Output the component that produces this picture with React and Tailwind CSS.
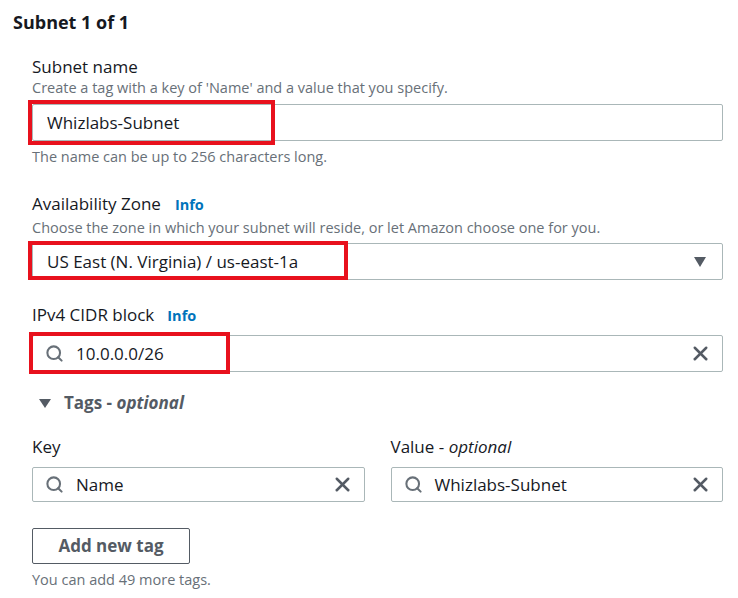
import { Search, X } from 'lucide-react'

const font = { fontFamily: '"Open Sans", "Liberation Sans", sans-serif' }

const SearchInput = ({ value, h = 'h-[37px]' }) => (
  <div className={`flex ${h} items-center rounded-[2px] border border-[#aab7b8] bg-white pl-[12px] pr-[10px]`}>
    <Search className="h-[19px] w-[19px] text-[#687078]" strokeWidth={2.6} />
    <span className="ml-[12px] flex-1 text-[17px] text-[#16191f]">{value}</span>
    <X className="h-[23px] w-[23px] text-[#545b64]" strokeWidth={2.6} />
  </div>
)

const App = () => {
  return (
    <div className="min-h-screen bg-white pt-[10px] text-[#16191f]" style={font}>
      <h2 className="pl-[13px] text-[18px] font-bold leading-[24px]">Subnet 1 of 1</h2>

      <div className="pl-[32px] pr-[15px]">
        {/* Subnet name */}
        <div className="mt-[22px]">
          <div className="text-[17px] leading-[22px]">Subnet name</div>
          <div className="text-[14.5px] leading-[20px] text-[#687078]">
            Create a tag with a key of 'Name' and a value that you specify.
          </div>
          <div className="relative mt-[6px]">
            <div className="flex h-[37px] items-center rounded-[2px] border border-[#aab7b8] bg-white px-[14px] text-[17px]">
              Whizlabs-Subnet
            </div>
            <div className="absolute left-[-4px] top-[-4px] h-[45px] w-[247px] border-[4px] border-[#e8111d]" />
          </div>
          <div className="mt-[6px] text-[14.5px] leading-[20px] text-[#687078]">
            The name can be up to 256 characters long.
          </div>
        </div>

        {/* Availability Zone */}
        <div className="mt-[26px]">
          <div className="flex items-baseline text-[17px] leading-[22px]">
            Availability Zone
            <span className="ml-[14px] text-[14.5px] font-bold text-[#0073bb]">Info</span>
          </div>
          <div className="mt-[2px] text-[14.5px] leading-[20px] text-[#687078]">
            Choose the zone in which your subnet will reside, or let Amazon choose one for you.
          </div>
          <div className="relative mt-[5px]">
            <div className="flex h-[37px] items-center justify-between rounded-[2px] border border-[#aab7b8] bg-white pl-[14px] pr-[16px] text-[17px]">
              US East (N. Virginia) / us-east-1a
              <svg width="12" height="10" viewBox="0 0 12 10">
                <path d="M0 0 H12 L6 10 Z" fill="#545b64" />
              </svg>
            </div>
            <div className="absolute left-[-4px] top-[-2px] h-[39px] w-[320px] border-[4px] border-[#e8111d]" />
          </div>
        </div>

        {/* IPv4 CIDR */}
        <div className="mt-[24px]">
          <div className="flex items-baseline text-[17px] leading-[22px]">
            IPv4 CIDR block
            <span className="ml-[13px] text-[14.5px] font-bold text-[#0073bb]">Info</span>
          </div>
          <div className="relative mt-[8px]">
            <SearchInput value="10.0.0.0/26" />
            <div className="absolute left-[-3px] top-[-3px] h-[42px] w-[201px] border-[4px] border-[#e8111d]" />
          </div>
        </div>

        {/* Tags */}
        <div className="mt-[20px] flex items-center pl-[7px] text-[17px] font-bold leading-[22px] text-[#545b64]">
          <svg width="12" height="9" viewBox="0 0 12 9">
            <path d="M0 0 H12 L6 9 Z" fill="#545b64" />
          </svg>
          <span className="ml-[13px]">
            Tags - <span className="italic">optional</span>
          </span>
        </div>

        <div className="mt-[22px] grid grid-cols-2 gap-x-[26px]">
          <div>
            <div className="text-[17px] leading-[22px]">Key</div>
            <div className="mt-[9px]">
              <SearchInput value="Name" h="h-[35px]" />
            </div>
          </div>
          <div>
            <div className="text-[17px] leading-[22px]">
              Value - <span className="italic">optional</span>
            </div>
            <div className="mt-[9px]">
              <SearchInput value="Whizlabs-Subnet" h="h-[35px]" />
            </div>
          </div>
        </div>

        <button className="mt-[26px] h-[36px] w-[158px] rounded-[2px] border border-[#545b64] bg-white text-[17px] font-bold text-[#545b64]">
          Add new tag
        </button>
        <div className="mt-[7px] text-[14.5px] leading-[18px] text-[#687078]">You can add 49 more tags.</div>
      </div>
    </div>
  )
}

export default App
